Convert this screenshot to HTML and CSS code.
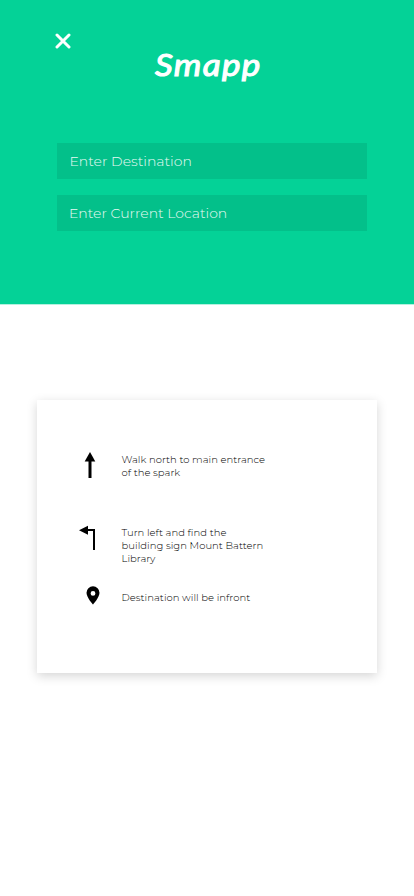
FILE: index.html
```html
<!DOCTYPE html>
<html lang="en">
<head>
<meta charset="utf-8">
<meta name="viewport" content="width=device-width, initial-scale=1">
<title>Smapp</title>
<link rel="stylesheet" href="styles.css">
</head>
<body>
<header class="header">
  <button class="close" aria-label="Close"><svg width="16" height="16" viewBox="0 0 16 16"><path d="M2 2L14 14M14 2L2 14" fill="none" stroke="#fff" stroke-width="3" stroke-linecap="round"/></svg></button>
  <h1 class="logo">Smapp</h1>
  <form class="fields">
    <input class="field" type="text" placeholder="Enter Destination" aria-label="Destination">
    <input class="field field-location" type="text" placeholder="Enter Current Location" aria-label="Current location">
  </form>
</header>
<main class="card">
  <ol class="steps">
    <li class="step step-walk">
      <svg class="icon icon-up" width="12" height="27" viewBox="0 0 12 27"><path d="M6 0L11.3 9.5H.7Z"/><path d="M4.5 8h3v18h-3z"/></svg>
      <p class="text">Walk north to main entrance<br>of the spark</p>
    </li>
    <li class="step step-turn">
      <svg class="icon icon-left" width="18" height="25" viewBox="0 0 18 25"><path d="M0 5.3L9 .8V9.8Z"/><path d="M7 4h9v21h-2V6H7z"/></svg>
      <p class="text">Turn left and find the<br>building sign Mount Battern<br>Library</p>
    </li>
    <li class="step step-end">
      <svg class="icon icon-pin" width="14" height="19" viewBox="0 0 14 19"><path fill-rule="evenodd" d="M7 .3A6.5 6.5 0 0 0 .5 6.8C.5 11.5 7 18.6 7 18.6s6.5-7.1 6.5-11.8A6.5 6.5 0 0 0 7 .3zM7 5a2.4 2.4 0 1 1 0 4.8A2.4 2.4 0 0 1 7 5z"/></svg>
      <p class="text">Destination will be infront</p>
    </li>
  </ol>
</main>
</body>
</html>
```
FILE: styles.css
```css
* { box-sizing: border-box; }
body {
  margin: 0;
  min-height: 896px;
  background: #fff;
  font-family: Montserrat, Inter, sans-serif;
}
.header {
  display: flow-root;
  height: 305px;
  border-bottom: 1px solid #b4f1df;
  background: #04d297;
  background-clip: padding-box;
}
.close {
  display: block;
  width: 16px;
  height: 16px;
  margin: 33px 0 0 55px;
  padding: 0;
  border: 0;
  background: none;
}
.close svg { display: block; }
.logo {
  width: max-content;
  height: 44px;
  margin: -7px 0 0 155px;
  color: #fff;
  font: italic 400 31px/44px "Segoe Print", Lato, sans-serif;
  letter-spacing: 1.2px;
  -webkit-text-stroke: 1.1px #fff;
  transform: scaleX(1.13);
  transform-origin: left center;
}
.fields {
  display: flex;
  flex-direction: column;
  gap: 16px;
  width: 310px;
  margin: 57px 0 0 57px;
}
.field {
  height: 36px;
  padding: 0 12.5px;
  border: 0;
  border-radius: 0;
  outline: 0;
  background: #03c08a;
  color: #fff;
  font: 300 14px/36px Montserrat, Inter, sans-serif;
}
.field-location { padding-left: 12px; }
.field::placeholder { color: #e8faf4; opacity: 1; }
.card {
  width: 340px;
  height: 273px;
  margin: 95px 0 0 37px;
  padding: 53px 0 0 42px;
  background: #fff;
  box-shadow: 0 3px 10px rgba(0, 0, 0, .17);
}
.steps {
  display: flex;
  flex-direction: column;
  margin: 0;
  padding: 0;
  list-style: none;
}
.step {
  display: grid;
  grid-template-columns: 42.5px 1fr;
  align-items: start;
}
.step-walk { height: 73px; }
.step-turn { height: 65px; }
.text {
  margin: 0;
  color: #000;
  font-size: 10px;
  font-weight: 300;
  line-height: 13px;
  letter-spacing: .03px;
  white-space: nowrap;
}
.icon { display: block; fill: #000; }
.icon-up { margin: -1px 0 0 5px; }
.icon-left { margin-top: -1px; }
.icon-pin { margin: -5px 0 0 7px; }
```
